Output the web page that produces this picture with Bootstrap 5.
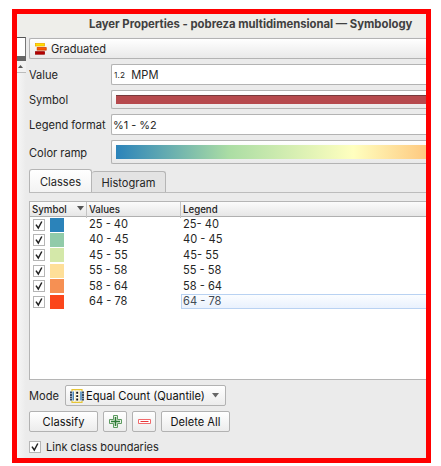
<!DOCTYPE html>
<html lang="en">
<head>
<meta charset="utf-8">
<title>Layer Properties</title>
<link href="https://cdn.jsdelivr.net/npm/bootstrap@5.3.0/dist/css/bootstrap.min.css" rel="stylesheet">
<style>
body{font-family:Inter,"Liberation Sans",sans-serif;font-size:11.1px;line-height:14px;color:#252525;background:#fff;width:441px;height:466px;padding:9px 0 0 12px}
.window-frame{width:419px;height:454px;border:5px solid #f00;background:#ebebeb}
.titlebar{height:23px;background:#eeeeea;font-size:11.3px;font-weight:700;color:#404040;padding:3px 0 0 72px}
.side{width:9px;background:linear-gradient(90deg,#f6f6f6,#ebebeb);flex:none}
.side-field{height:19px;background:#fff;border-top:1px solid #555;border-right:1px solid #777}
.side-dark{height:5px;background:#666}
.side-head{height:12px;background:#f1f1f1;border-bottom:1px solid #bbb}
.side svg{display:block}
.main{padding:1px 0 0 3px;min-width:0}
.line-row{flex:none}
.line-row>label{width:82px;flex:none;letter-spacing:-.02px}
.ctl{border:1px solid #b3b3b3;border-right:0;border-radius:2px 0 0 2px;background:linear-gradient(#fff,#e9e9e9)}
.field-white{background:#fff}
.sym-color{height:9px;background:#b6494d;border-top:1px solid #76393b}
.ramp{height:14px;background:linear-gradient(90deg,#2b83ba 0,#abdda4 36.5%,#ffffbf 76.5%,#fec980 100%)}
.tabs{height:23px;border-bottom:1px solid #bcbcbc;margin-top:6px}
.tab-on,.tab-off{border:1px solid #b5b5b5;border-bottom:0;border-radius:3px 3px 0 0}
.tab-on{width:63px;height:23px;background:linear-gradient(#fff,#f3f3f3);padding-top:5px}
.tab-off{width:74px;height:21px;background:#e3e3e3;border-left:0;padding-top:4px}
.classes{height:179px;margin-top:8px;border:1px solid #b5b5b5;border-right:0;background:#fff}
.grid-line{display:grid;grid-template-columns:57px 94px 1fr}
.head-line{height:15px;background:linear-gradient(#fbfbfb,#e6e6e6);border-bottom:1px solid #b0b0b0;font-size:9.7px;font-weight:500;line-height:16px}
.head-line>div{padding-left:2px;border-right:1px solid #c4c4c4}
.head-line>div:last-child{border:0}
.class-line{height:15.4px;line-height:15.4px}
.class-line>div{padding-left:2px}
.class-line>div:first-child{padding-left:3px}
.class-line>div:last-child{border:1px solid transparent;border-right:0;line-height:13.4px;padding-left:1px}
.class-line .picked{background:linear-gradient(#fbfdff,#e9f1fd);border-color:#b9d2f2!important;color:#424a54}
.box{width:12px;height:12px;border:1px solid #b5b5b5;background:#fff;flex:none}
.box svg{display:block;width:10px;height:10px;overflow:visible}
.swatch{width:14px;height:14px;margin-left:5px}
.pushy{height:21px;border:1px solid #b2b2b2;border-radius:2px;background:linear-gradient(#fff,#ececec);color:#111}
</style>
<script src="https://cdn.jsdelivr.net/npm/bootstrap@5.3.0/dist/js/bootstrap.bundle.min.js"></script>
</head>
<body class="overflow-hidden">
<svg class="d-none"><symbol id="tick" viewBox="0 0 10 10"><path d="M2 4.6 4.3 8 7.8 1.5" fill="none" stroke="#222" stroke-width="1.5"/></symbol></svg>
<div class="window-frame d-flex flex-column overflow-hidden">
  <div class="titlebar text-nowrap">Layer Properties - pobreza multidimensional — Symbology</div>
  <div class="d-flex flex-fill">
    <div class="side">
      <div class="side-field"></div><div class="side-dark"></div>
      <div class="side-head"><svg width="9" height="11"><path d="M1 7 3.5 4 6 7z" fill="#555"/></svg></div>
    </div>
    <div class="main d-flex flex-column flex-fill text-nowrap">
      <div class="ctl line-row d-flex align-items-center" style="height:21px">
        <svg width="13" height="12" class="ms-1" style="margin-right:4px"><rect x="1.500" y=".5" width="9" height="2.500" fill="#ffe100" stroke="#f0ae00" stroke-width=".8"/><rect x="3.200" y="4.600" width="9" height="2.500" fill="#ff5a00" stroke="#d23f00" stroke-width=".8"/><rect x="1.500" y="8.700" width="9" height="2.500" fill="#b80000" stroke="#960000" stroke-width=".8"/></svg>
        <span>Graduated</span>
      </div>
      <div class="line-row d-flex align-items-center" style="margin-top:5px"><label>Value</label><div class="ctl field-white flex-fill d-flex align-items-center" style="height:21px"><span style="font-size:8.2px;letter-spacing:.2px;margin:0 6px 0 2px">1.2</span><span>MPM</span></div></div>
      <div class="line-row d-flex align-items-center" style="margin-top:5px"><label>Symbol</label><div class="ctl flex-fill d-flex align-items-center" style="height:19px"><div class="sym-color flex-fill ms-1"></div></div></div>
      <div class="line-row d-flex align-items-center" style="margin-top:5px"><label>Legend format</label><div class="ctl field-white flex-fill d-flex align-items-center" style="height:21px;padding-left:1px"><span style="font-size:10.9px">%1 - %2</span></div></div>
      <div class="line-row d-flex align-items-center" style="margin-top:5px"><label style="padding-top:1px">Color ramp</label><div class="ctl flex-fill d-flex align-items-center" style="height:24px"><div class="ramp flex-fill ms-1"></div></div></div>
      <div class="tabs line-row d-flex align-items-end">
        <div class="tab-on text-center">Classes</div><div class="tab-off text-center">Histogram</div>
      </div>
      <div class="classes line-row">
        <div class="grid-line head-line"><div class="d-flex">Symbol<svg width="8" height="6" style="margin:4px 0 0 10px"><path d="M0 0h7L3.5 4.5z" fill="#555"/></svg></div><div>Values</div><div>Legend</div></div>
        <div class="grid-line class-line"><div class="d-flex align-items-center"><span class="box"><svg><use href="#tick"/></svg></span><span class="swatch" style="background:#2b83ba"></span></div><div>25 - 40</div><div>25- 40</div></div>
        <div class="grid-line class-line"><div class="d-flex align-items-center"><span class="box"><svg><use href="#tick"/></svg></span><span class="swatch" style="background:#91cba9"></span></div><div>40 - 45</div><div>40 - 45</div></div>
        <div class="grid-line class-line"><div class="d-flex align-items-center"><span class="box"><svg><use href="#tick"/></svg></span><span class="swatch" style="background:#d4e8a9"></span></div><div>45 - 55</div><div>45- 55</div></div>
        <div class="grid-line class-line"><div class="d-flex align-items-center"><span class="box"><svg><use href="#tick"/></svg></span><span class="swatch" style="background:#fedf99"></span></div><div>55 - 58</div><div>55 - 58</div></div>
        <div class="grid-line class-line"><div class="d-flex align-items-center"><span class="box"><svg><use href="#tick"/></svg></span><span class="swatch" style="background:#f69053"></span></div><div>58 - 64</div><div>58 - 64</div></div>
        <div class="grid-line class-line"><div class="d-flex align-items-center"><span class="box"><svg><use href="#tick"/></svg></span><span class="swatch" style="background:#fb461b"></span></div><div>64 - 78</div><div class="picked">64 - 78</div></div>
      </div>
      <div class="line-row d-flex align-items-center" style="margin-top:5px"><span style="width:36px">Mode</span>
        <div class="pushy d-flex align-items-center" style="width:161px">
          <svg width="14" height="14" style="margin:0 2px 0 4px"><path d="M2 1.500h10v11H2z" fill="#fff"/><path d="M2 2.500V.7h10v1.800M2 11.500v1.800h10v-1.800" fill="none" stroke="#e6c537" stroke-width="1.200"/><path d="M5.300 1v12M9.200 1v12" stroke="#f0df8c" stroke-width=".7"/><path d="M1 2.500v9M13 2.500v9" stroke="#142c48" stroke-width="1.700" stroke-dasharray="1.900 .6"/><path d="M3.200 2.500v9M11 2.500v9" stroke="#3f80b8" stroke-width="1.500"/><path d="M7.200 2.800v9" stroke="#111" stroke-width="1.900" stroke-dasharray="1.900 1.500"/></svg>
          <span style="font-size:11.2px">Equal Count (Quantile)</span><svg class="ms-auto" width="8" height="5" style="margin-right:5px"><path d="M0 0h7L3.500 4.500z" fill="#666"/></svg>
        </div></div>
      <div class="line-row d-flex" style="margin-top:5px;gap:5px">
        <div class="pushy d-flex align-items-center justify-content-center" style="width:69px">Classify</div>
        <div class="pushy d-flex align-items-center justify-content-center" style="width:24px"><svg width="13" height="13"><path d="M4.500.5h4v4h4v4h-4v4h-4v-4h-4v-4h4z" fill="#e8f3e6" stroke="#5d9a60"/><path d="M6.500 2v9M2 6.500h9" stroke="#2c7a35" stroke-width="1.500"/></svg></div>
        <div class="pushy d-flex align-items-center justify-content-center" style="width:24px"><svg width="13" height="13"><path d="M.5 4.500h12v4H.5z" fill="#fff" stroke="#f06a6c"/><path d="M2.500 6.500h8" stroke="#e8373b"/></svg></div>
        <div class="pushy d-flex align-items-center justify-content-center" style="width:69px">Delete All</div>
      </div>
      <div class="line-row d-flex align-items-center" style="margin-top:8px"><span class="box"><svg><use href="#tick"/></svg></span><span style="margin-left:5px;font-size:11px">Link class boundaries</span></div>
    </div>
  </div>
</div>
</body>
</html>
